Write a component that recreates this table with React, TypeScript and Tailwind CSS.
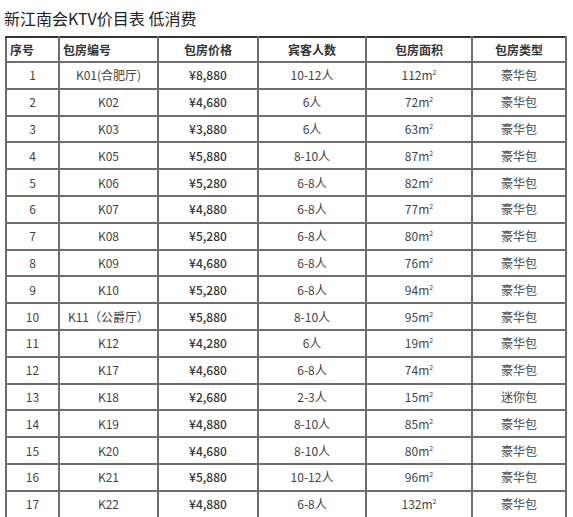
import React from "react";

const rows: [string, string, string, string, string, string][] = [
  ["1", "K01(合肥厅)", "¥8,880", "10-12人", "112", "豪华包"],
  ["2", "K02", "¥4,680", "6人", "72", "豪华包"],
  ["3", "K03", "¥3,880", "6人", "63", "豪华包"],
  ["4", "K05", "¥5,880", "8-10人", "87", "豪华包"],
  ["5", "K06", "¥5,280", "6-8人", "82", "豪华包"],
  ["6", "K07", "¥4,880", "6-8人", "77", "豪华包"],
  ["7", "K08", "¥5,280", "6-8人", "80", "豪华包"],
  ["8", "K09", "¥4,680", "6-8人", "76", "豪华包"],
  ["9", "K10", "¥5,280", "6-8人", "94", "豪华包"],
  ["10", "K11（公爵厅）", "¥5,880", "8-10人", "95", "豪华包"],
  ["11", "K12", "¥4,280", "6人", "19", "豪华包"],
  ["12", "K17", "¥4,680", "6-8人", "74", "豪华包"],
  ["13", "K18", "¥2,680", "2-3人", "15", "迷你包"],
  ["14", "K19", "¥4,880", "8-10人", "85", "豪华包"],
  ["15", "K20", "¥4,680", "8-10人", "80", "豪华包"],
  ["16", "K21", "¥5,880", "10-12人", "96", "豪华包"],
  ["17", "K22", "¥4,880", "6-8人", "132", "豪华包"],
];

const widths = ["w-[53px]", "w-[99px]", "w-[100px]", "w-[108px]", "w-[106px]", "w-[94px]"];

export default function App() {
  return (
    <div
      className="w-[573px] h-[517px] overflow-hidden bg-white"
      style={{ fontFamily: '"Noto Sans CJK SC", "Noto Sans", sans-serif' }}
    >
      <div className="pl-[4px] pt-[8px] h-[36px] text-[16px] leading-[20px] text-[#222]">
        新江南会KTV价目表 低消费
      </div>
      <table className="ml-[5px] border-collapse table-fixed w-[560px] border-t-2 border-t-[#333]">
        <colgroup>
          {widths.map((w, i) => (
            <col key={i} className={w} />
          ))}
        </colgroup>
        <thead>
          <tr className="h-[25px]">
            {["序号", "包房编号", "包房价格", "宾客人数", "包房面积", "包房类型"].map((h, i) => (
              <th
                key={h}
                className={`border-2 border-[#6e6e6e] border-t-[#333] p-0 text-[12px] font-bold text-[#333] leading-none ${
                  i < 2 ? "text-left pl-[3px]" : "text-center"
                }`}
              >
                {h}
              </th>
            ))}
          </tr>
        </thead>
        <tbody>
          {rows.map((r) => (
            <tr key={r[0]} className="h-[26.8px]">
              {r.map((c, i) => (
                <td
                  key={i}
                  className={`border-2 border-[#6e6e6e] p-0 text-center text-[12px] leading-none whitespace-nowrap ${
                    i === 2 ? "font-medium text-[#333]" : "text-[#444]"
                  }`}
                >
                  {i === 4 ? (
                    <span>
                      {c}m<sup className="text-[7px] relative -top-[5px]">2</sup>
                    </span>
                  ) : (
                    c
                  )}
                </td>
              ))}
            </tr>
          ))}
        </tbody>
      </table>
    </div>
  );
}
